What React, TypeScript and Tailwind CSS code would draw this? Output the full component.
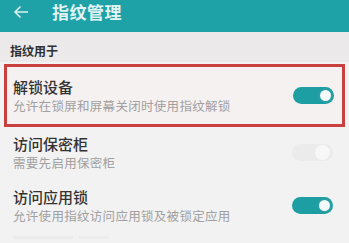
import React from "react";

const font = { fontFamily: '"Noto Sans CJK SC", "Noto Sans", sans-serif' };

function Toggle({ on, disabled }: { on: boolean; disabled?: boolean }) {
  if (disabled || !on) {
    return (
      <div className="w-[41px] h-[17px] rounded-full bg-[#ebebeb] relative shrink-0">
        <div className="absolute right-[3px] top-[1px] w-[15px] h-[15px] rounded-full bg-[#f7f7f7]" />
      </div>
    );
  }
  return (
    <div className="w-[41px] h-[17px] rounded-full bg-[#1c9ea3] relative shrink-0">
      <div className="absolute right-[1px] top-[1px] w-[15px] h-[15px] rounded-full bg-[#f4fbfb] border-[2px] border-[#2a9ea3]" />
    </div>
  );
}

function Row({
  title,
  sub,
  on,
  disabled,
  className,
}: {
  title: string;
  sub: string;
  on: boolean;
  disabled?: boolean;
  className?: string;
}) {
  return (
    <div className={"flex items-center justify-between shrink-0 " + (className || "")}>
      <div className="flex flex-col">
        <div className="text-[15px] leading-[18px] text-[#333333] font-medium">{title}</div>
        <div className="text-[12.5px] leading-[15px] mt-[2px] text-[#a0a0a0] tracking-[0.3px]">{sub}</div>
      </div>
      <Toggle on={on} disabled={disabled} />
    </div>
  );
}

export default function App() {
  return (
    <div className="w-[349px] h-[243px] overflow-hidden bg-[#f2f2f2] flex flex-col" style={font}>
      <div className="h-[32px] bg-[#1fa2a7] flex items-start shrink-0">
        <div className="h-[24px] flex items-center">
          <svg width="16" height="14" viewBox="0 0 16 14" className="ml-[13px]">
            <path d="M15 7H2M7.5 1.5L2 7l5.5 5.5" stroke="#d8f1f2" strokeWidth="1.6" fill="none" />
          </svg>
          <div className="ml-[23px] text-[17px] leading-[20px] text-[#e3f3f3] font-bold tracking-[0.5px]">指纹管理</div>
        </div>
      </div>
      <div className="h-[30px] bg-[#ebe9ea] flex items-end pl-[10px] pb-[5px] shrink-0">
        <div className="text-[12px] leading-[13px] font-bold text-[#2e2e2e]">指纹用于</div>
      </div>
      <div className="mx-[4px] mt-[2px] h-[63px] shrink-0 border-[3px] border-[#c9403f] bg-[#f6f1f1] flex flex-col justify-center">
        <Row title="解锁设备" sub="允许在锁屏和屏幕关闭时使用指纹解锁" on className="pl-[6px] pr-[8px]" />
      </div>
      <Row title="访问保密柜" sub="需要先启用保密柜" on={false} disabled className="mt-[8px] pl-[13px] pr-[16px]" />
      <Row title="访问应用锁" sub="允许使用指纹访问应用锁及被锁定应用" on className="mt-[18px] pl-[13px] pr-[16px]" />
      <div className="mt-[13px] pl-[13px] h-[12px] shrink-0 flex items-start gap-[6px]">
        <div className="w-[60px] h-[3px] bg-[#ebebeb]" />
        <div className="w-[30px] h-[3px] bg-[#ededed]" />
      </div>
    </div>
  );
}
